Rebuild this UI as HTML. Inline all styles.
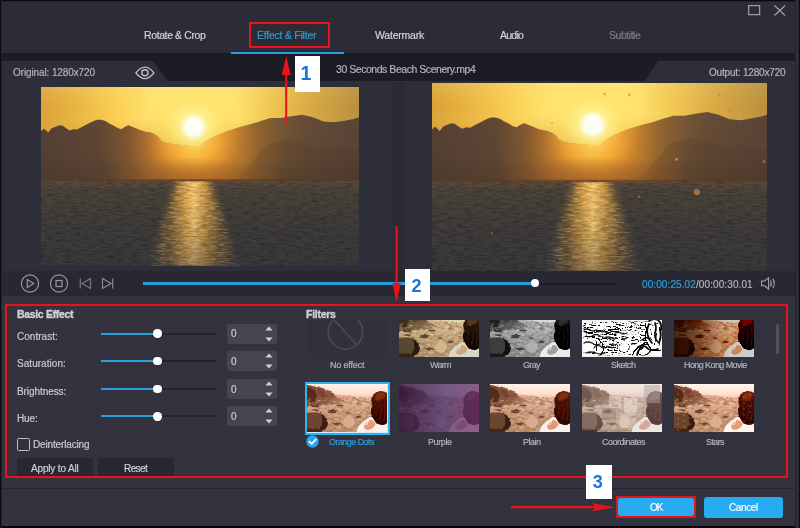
<!DOCTYPE html>
<html><head><meta charset="utf-8"><title>Effect &amp; Filter</title>
<style>
html,body{margin:0;padding:0}
body{width:800px;height:528px;position:relative;overflow:hidden;background:#32333e;font-family:"Liberation Sans", "DejaVu Sans", sans-serif}
.a{position:absolute}
.t{position:absolute;white-space:nowrap;height:16px;line-height:16px;will-change:transform;-webkit-text-stroke:0.18px}
.th{position:absolute;width:80px;overflow:hidden}
.mk{will-change:transform;position:absolute;background:#fff;color:#1b74d8;font-weight:bold;text-align:center;font-family:"Liberation Sans", "DejaVu Sans", sans-serif}
</style></head><body>

<svg width="0" height="0" style="position:absolute">
<defs>
<radialGradient id="sky" gradientUnits="userSpaceOnUse" cx="385" cy="105" r="440">
<stop offset="0" stop-color="#fff6b4"/><stop offset="0.1" stop-color="#ffee8c"/><stop offset="0.24" stop-color="#ffe26c"/><stop offset="0.45" stop-color="#facc4e"/><stop offset="0.72" stop-color="#e8b03a"/><stop offset="1" stop-color="#d49a30"/>
</radialGradient>
<radialGradient id="sun" gradientUnits="userSpaceOnUse" cx="385" cy="111" r="110">
<stop offset="0" stop-color="#ffffff"/><stop offset="0.18" stop-color="#fffff0"/><stop offset="0.3" stop-color="#fff08c" stop-opacity="0.92"/><stop offset="0.6" stop-color="#ffe060" stop-opacity="0.5"/><stop offset="1" stop-color="#ffd850" stop-opacity="0"/>
</radialGradient>
<linearGradient id="skyv" gradientUnits="userSpaceOnUse" x1="0" y1="17" x2="0" y2="160">
<stop offset="0" stop-color="#fff0b0" stop-opacity="0.22"/><stop offset="0.4" stop-color="#ffe080" stop-opacity="0"/><stop offset="1" stop-color="#d87c18" stop-opacity="0.55"/>
</linearGradient>
<linearGradient id="skyh" gradientUnits="userSpaceOnUse" x1="27" y1="0" x2="773" y2="0"><stop offset="0" stop-color="#a07030" stop-opacity="0.12"/><stop offset="0.25" stop-color="#a07838" stop-opacity="0"/><stop offset="0.62" stop-color="#a08048" stop-opacity="0"/><stop offset="1" stop-color="#8a7448" stop-opacity="0.42"/></linearGradient>
<linearGradient id="mtL" gradientUnits="userSpaceOnUse" x1="27" y1="0" x2="400" y2="0">
<stop offset="0" stop-color="#544034"/><stop offset="0.35" stop-color="#5e4634"/><stop offset="0.6" stop-color="#745232"/><stop offset="0.8" stop-color="#a87432"/><stop offset="1" stop-color="#f0a838"/>
</linearGradient>
<linearGradient id="mtR" gradientUnits="userSpaceOnUse" x1="400" y1="0" x2="773" y2="0">
<stop offset="0" stop-color="#f0a838"/><stop offset="0.14" stop-color="#bc8232"/><stop offset="0.35" stop-color="#866032"/><stop offset="0.65" stop-color="#664c36"/><stop offset="1" stop-color="#5a4436"/>
</linearGradient>
<linearGradient id="mtShade" gradientUnits="userSpaceOnUse" x1="0" y1="90" x2="0" y2="240">
<stop offset="0" stop-color="#3a2a20" stop-opacity="0"/><stop offset="0.6" stop-color="#3a2a20" stop-opacity="0.06"/><stop offset="1" stop-color="#3a261c" stop-opacity="0.3"/>
</linearGradient>
<radialGradient id="glow" gradientUnits="userSpaceOnUse" cx="385" cy="150" r="215">
<stop offset="0" stop-color="#ffc84c" stop-opacity="1"/><stop offset="0.25" stop-color="#f4a230" stop-opacity="0.9"/><stop offset="0.5" stop-color="#de8828" stop-opacity="0.48"/><stop offset="0.75" stop-color="#cc7c28" stop-opacity="0.16"/><stop offset="1" stop-color="#c87828" stop-opacity="0"/>
</radialGradient>
<radialGradient id="hband">
<stop offset="0" stop-color="#a05c24" stop-opacity="0.7"/><stop offset="0.5" stop-color="#905428" stop-opacity="0.4"/><stop offset="1" stop-color="#80502c" stop-opacity="0"/>
</radialGradient>
<linearGradient id="sea" gradientUnits="userSpaceOnUse" x1="0" y1="237" x2="0" y2="437">
<stop offset="0" stop-color="#5e4c3a"/><stop offset="0.1" stop-color="#4c443c"/><stop offset="0.5" stop-color="#403d3b"/><stop offset="1" stop-color="#39393b"/>
</linearGradient>
<linearGradient id="refl" gradientUnits="userSpaceOnUse" x1="280" y1="0" x2="490" y2="0">
<stop offset="0" stop-color="#a06c2c" stop-opacity="0"/><stop offset="0.22" stop-color="#b07a30" stop-opacity="0.55"/><stop offset="0.4" stop-color="#e4a848" stop-opacity="0.95"/><stop offset="0.5" stop-color="#ffd070" stop-opacity="1"/><stop offset="0.6" stop-color="#e4a848" stop-opacity="0.95"/><stop offset="0.78" stop-color="#b07a30" stop-opacity="0.55"/><stop offset="1" stop-color="#a06c2c" stop-opacity="0"/>
</linearGradient>
<linearGradient id="reflfade" gradientUnits="userSpaceOnUse" x1="0" y1="237" x2="0" y2="437">
<stop offset="0" stop-color="#fff"/><stop offset="0.45" stop-color="#ddd"/><stop offset="1" stop-color="#8a8a8a"/>
</linearGradient>
<filter id="rb" x="-20%" y="-5%" width="140%" height="110%"><feGaussianBlur stdDeviation="9 2"/></filter>
<mask id="reflmask" maskUnits="userSpaceOnUse" x="27" y="237" width="746" height="200">
<polygon points="346,237 424,237 492,437 278,437" fill="url(#reflfade)" filter="url(#rb)"/>
</mask>
<filter id="water" x="0" y="0" width="100%" height="100%">
<feTurbulence type="fractalNoise" baseFrequency="0.05 0.24" numOctaves="3" seed="3" result="n"/>
<feColorMatrix in="n" type="matrix" values="0 0 0 0 0  0 0 0 0 0  0 0 0 0 0  1.8 0 0 0 -0.7"/>
</filter>
<filter id="water2" x="0" y="0" width="100%" height="100%">
<feTurbulence type="fractalNoise" baseFrequency="0.05 0.26" numOctaves="3" seed="11" result="n"/>
<feColorMatrix in="n" type="matrix" values="0 0 0 0 1  0 0 0 0 0.85  0 0 0 0 0.5  2.4 0 0 0 -1.1"/>
</filter>
<clipPath id="mclip"><polygon points="27,121 33,115 38,118 44,124 52,114 60,111 70,107 78,108 86,114 94,119 104,116 112,117 124,110 136,104 148,98 158,94 168,94 178,97 188,103 198,108 208,114 216,116 224,110 232,107 242,111 252,115 262,119 272,122 284,124 294,128 302,134 310,144 318,148 334,151 400,158 410,146 420,140 440,130 465,120 490,112 520,104 545,96 565,90 590,90 610,86 640,82 665,88 690,98 715,100 740,96 760,92 773,88 773,240 27,240"/></clipPath>
<clipPath id="vclip"><rect x="27" y="17" width="746" height="420"/></clipPath>
<symbol id="sunset" viewBox="27 17 746 420" preserveAspectRatio="none">
<g clip-path="url(#vclip)">
<rect x="27" y="17" width="746" height="225" fill="url(#sky)"/>
<rect x="27" y="17" width="746" height="225" fill="url(#skyv)"/>
<rect x="27" y="17" width="746" height="225" fill="url(#skyh)"/>
<rect x="27" y="17" width="746" height="225" fill="url(#sun)"/>
<polygon fill="url(#mtL)" points="27,121 33,115 38,118 44,124 52,114 60,111 70,107 78,108 86,114 94,119 104,116 112,117 124,110 136,104 148,98 158,94 168,94 178,97 188,103 198,108 208,114 216,116 224,110 232,107 242,111 252,115 262,119 272,122 284,124 294,128 302,134 310,144 318,148 334,151 400,158 400,240 27,240"/>
<polygon fill="url(#mtR)" points="400,158 410,146 420,140 440,130 465,120 490,112 520,104 545,96 565,90 590,90 610,86 640,82 665,88 690,98 715,100 740,96 760,92 773,88 773,240 400,240"/>
<polygon fill="#4a382c" opacity="0.25" points="560,150 600,140 640,150 680,160 720,155 773,165 773,240 480,240"/>
<rect x="27" y="90" width="746" height="150" fill="url(#mtShade)"/>
<g clip-path="url(#mclip)"><rect x="27" y="-40" width="746" height="280" fill="url(#glow)"/></g>
<rect x="27" y="17" width="746" height="225" fill="url(#sun)" opacity="0.35"/>
<ellipse cx="385" cy="240" rx="230" ry="58" fill="url(#hband)"/>
<rect x="27" y="233" width="746" height="5" fill="#5a3c26" opacity="0.6"/>
<rect x="27" y="237" width="746" height="200" fill="url(#sea)"/>
<g mask="url(#reflmask)"><rect x="260" y="237" width="250" height="200" fill="url(#refl)"/></g>
<rect x="27" y="237" width="746" height="200" fill="#14110e" filter="url(#water)" opacity="0.3"/>
<g mask="url(#reflmask)"><rect x="260" y="237" width="250" height="200" filter="url(#water2)" opacity="0.5"/></g>
</g>
</symbol>
</defs>
</svg>


<svg width="0" height="0" style="position:absolute">
<defs>
<linearGradient id="dsky" x1="0" y1="0" x2="0" y2="1"><stop offset="0" stop-color="#f3e7e0"/><stop offset="0.2" stop-color="#ecd6ca"/><stop offset="0.34" stop-color="#d9b4a2"/><stop offset="0.5" stop-color="#c49e86"/><stop offset="1" stop-color="#b08a70"/></linearGradient>
<linearGradient id="dcliff" x1="0" y1="0" x2="1" y2="0"><stop offset="0" stop-color="#6e4a3a"/><stop offset="0.6" stop-color="#8c6450"/><stop offset="1" stop-color="#b88e7a"/></linearGradient>
<filter id="blur1" x="-10%" y="-10%" width="120%" height="120%"><feGaussianBlur stdDeviation="0.5"/></filter>
<filter id="blur2" x="-10%" y="-10%" width="120%" height="120%"><feGaussianBlur stdDeviation="0.9"/></filter>
<filter id="dnoise" x="0" y="0" width="100%" height="100%">
<feTurbulence type="fractalNoise" baseFrequency="0.22 0.42" numOctaves="3" seed="7"/>
<feColorMatrix type="matrix" values="0 0 0 0 0.28  0 0 0 0 0.17  0 0 0 0 0.12  2.6 0 0 0 -1.15"/>
</filter>
<filter id="dnoise2" x="0" y="0" width="100%" height="100%">
<feTurbulence type="fractalNoise" baseFrequency="0.2 0.4" numOctaves="3" seed="21"/>
<feColorMatrix type="matrix" values="0 0 0 0 0.93  0 0 0 0 0.82  0 0 0 0 0.75  2.4 0 0 0 -1.2"/>
</filter>
<linearGradient id="hairg" x1="0" y1="0" x2="0" y2="1"><stop offset="0" stop-color="#64301e"/><stop offset="0.35" stop-color="#461c13"/><stop offset="1" stop-color="#2c110b"/></linearGradient>
<filter id="rough" x="-5%" y="-5%" width="110%" height="110%"><feTurbulence type="fractalNoise" baseFrequency="0.18" numOctaves="2" seed="4" result="t"/><feDisplacementMap in="SourceGraphic" in2="t" scale="3.2" xChannelSelector="R" yChannelSelector="G"/><feGaussianBlur stdDeviation="0.7"/></filter>
<filter id="rough2" x="-10%" y="-10%" width="120%" height="120%"><feTurbulence type="fractalNoise" baseFrequency="0.22" numOctaves="2" seed="9" result="t"/><feDisplacementMap in="SourceGraphic" in2="t" scale="2.4" xChannelSelector="R" yChannelSelector="G"/><feGaussianBlur stdDeviation="0.6"/></filter>
<clipPath id="dclip"><rect width="80" height="48"/></clipPath>
<clipPath id="gclip"><rect y="13" width="80" height="35"/></clipPath>
<symbol id="desert" viewBox="0 0 80 48" preserveAspectRatio="none">
<g clip-path="url(#dclip)">
<rect width="80" height="48" fill="url(#dsky)"/>
<g filter="url(#rough)">
<polygon points="22,10 34,11 46,12.5 58,14 72,14.5 72,20 22,20" fill="#cfa592"/>
<polygon points="-3,0 4,1.5 9,3 14,3.5 19,5 23,7 27,10 30,13.5 35,16 42,18.5 -3,23" fill="url(#dcliff)"/>
<polygon points="-3,3 4,4 8,7 10,12 8,18 -3,21" fill="#553629"/>
<polygon points="11,5 16,6 19,9 20,13 15,15 12,11" fill="#6c4838" opacity="0.8"/>
<polygon points="21,8 25,10 27,14 22,15" fill="#7c5644" opacity="0.7"/>
</g>
<g clip-path="url(#gclip)"><rect y="13" width="80" height="35" filter="url(#dnoise)" opacity="1"/>
<rect y="16" width="80" height="32" filter="url(#dnoise2)" opacity="0.45"/></g>
<g filter="url(#rough)">
<path d="M-3,30 Q6,27 13,29 Q18,31 19,37 Q19,43 15,46 L-3,47 Z" fill="#6a4e3e"/>
<path d="M14,30 Q19,32 20,38 Q20,44 15,47 L12,46 Q16,41 15,36 Q15,32 14,30 Z" fill="#3e2a20"/>
<path d="M-3,44 L16,45.5 L14,49 L-3,49 Z" fill="#4a3226"/>
<path d="M2,22 q6,-2.5 12,0 q-5,2.5 -12,0Z M20,27 q6,-2.5 11,0 q-5,2.5 -11,0Z M29,21.5 q4,-2 8,0 q-4,2 -8,0Z M24,40 q6,-2.5 12,0 q-6,2.5 -12,0Z M48,33 q3.5,-2 7,0 q-3.5,2 -7,0Z M38,29 q3,-1.5 6,0 q-3,1.5 -6,0Z M4,26 q4,-1.5 9,0.5 q-4,1.5 -9,-0.5Z" fill="#573a2d" opacity="0.8"/>
<ellipse cx="42" cy="38" rx="6" ry="6" fill="#d4b4a0" opacity="0.7"/>
<ellipse cx="48" cy="24" rx="10" ry="2.5" fill="#d0a894" opacity="0.5"/>
</g>
<g filter="url(#blur1)">
<path d="M49,49 L51,43 Q55,38 60,35 L64,32.5 Q67,33 69,40 L81,38 L81,49 Z" fill="#ece5e1"/>
<path d="M57,44 Q57.5,39 62,36.2 Q66.5,35 68.5,40.5 Q66,45.5 60,46 Z" fill="#d39680"/>
<path d="M63.5,33 L59.5,41" stroke="#f6f0ec" stroke-width="1" fill="none"/>
</g>
<g filter="url(#rough2)">
<path d="M73,7 Q68.5,7.6 66.2,10.8 Q63.8,14 64.2,17 Q64.6,19.6 65.6,21.8 Q63.2,25 63.9,28.5 Q64.4,31.5 66,34 Q67.4,37.5 70,39.4 Q73.5,41.2 76.5,41 Q79,40.4 81,38.5 L81,9.5 Q77.5,6.6 73,7 Z" fill="url(#hairg)"/>
<path d="M73,8.6 Q70,9.4 68.6,12 Q68,14.5 69.5,16.5 Q72.5,17.5 75.5,15.8 Q78,13.8 78.6,10.6 Q76,8.2 73,8.6 Z" fill="#874228" opacity="0.7"/>
<path d="M68.5,20 Q70.5,26 68.5,31 M73,20 Q75,28 72.5,36 M77.5,18 Q79,27 77,37" stroke="#6a2c1c" stroke-width="1" fill="none" opacity="0.8"/>
</g>
</g>
</symbol>
</defs>
</svg>

<!-- header -->
<div class="a" style="left:0;top:0;width:800px;height:53px;background:#2b2c37"></div>
<div class="a" style="left:0;top:53px;width:800px;height:28px;background:#1b1c25"></div>
<!-- original tab / output tab -->
<svg class="a" style="left:0;top:61px" width="800" height="22" viewBox="0 0 800 22">
<polygon points="0,0 153.5,0 167.8,20.5 0,20.5" fill="#2d2e39"/>
<polygon points="658,0 800,0 800,20.5 644.6,20.5" fill="#2d2e39"/>
</svg>
<!-- tab underline -->
<div class="a" style="left:231px;top:51.5px;width:113px;height:2.4px;background:#2a9fdc"></div>
<!-- window controls -->
<svg class="a" style="left:744px;top:2px" width="48" height="18" viewBox="0 0 48 18">
<rect x="4.6" y="3.6" width="11" height="9" fill="none" stroke="#9899a2" stroke-width="1.3"/>
<path d="M30.5,3.5 L41,13.5 M41,3.5 L30.5,13.5" stroke="#a4a5ad" stroke-width="1.1" fill="none"/>
</svg>
<!-- eye -->
<svg class="a" style="left:130px;top:62px" width="30" height="22" viewBox="130 62 30 22">
<path d="M135.9,72.8 Q144.9,61.3 153.9,72.8 Q144.9,84.3 135.9,72.8 Z" fill="none" stroke="#c6c7cd" stroke-width="1.35" stroke-linejoin="round"/>
<circle cx="144.9" cy="72.8" r="3.1" fill="none" stroke="#c6c7cd" stroke-width="1.35"/>
</svg>
<div class="a" style="left:0;top:81px;width:800px;height:190px;background:#2d2e39"></div>
<!-- center divider -->
<div class="a" style="left:393px;top:82px;width:10px;height:189px;background:#292a34"></div>
<!-- videos -->
<svg class="a" style="left:41px;top:87px" width="318" height="179"><use href="#sunset" width="318" height="179"/></svg>
<svg class="a" style="left:432px;top:83px" width="335" height="188"><use href="#sunset" width="335" height="188"/>
<g fill="#d8843a" opacity="0.6"><circle cx="172.5" cy="11" r="1.3"/><circle cx="197.3" cy="12" r="1.4"/><circle cx="287.3" cy="12" r="1.5"/><circle cx="298.5" cy="28" r="1.6"/><circle cx="244.5" cy="76.3" r="1.5" fill="#e8a860"/><circle cx="332" cy="78.5" r="1.6"/><circle cx="264.8" cy="109.1" r="3.2" fill="#e0904a"/><circle cx="207" cy="113.6" r="1.2"/><circle cx="120" cy="40" r="1.1"/><circle cx="60" cy="150" r="1.1"/></g>
</svg>
<!-- controls bar -->
<div class="a" style="left:0;top:271px;width:800px;height:25px;background:#272832"></div>
<svg class="a" style="left:18px;top:272px" width="104" height="24" viewBox="18 272 104 24" fill="none" stroke="#9596a0" stroke-width="1.2">
<circle cx="30" cy="283.5" r="8.6"/><path d="M27.3,279.6 L33.6,283.5 L27.3,287.4 Z"/>
<circle cx="59" cy="283.5" r="8.6"/><rect x="56" y="280.5" width="6" height="6"/>
<path stroke="#777883" d="M80.3,278.5 V288.5 M90.5,278.5 L82,283.5 L90.5,288.5 Z"/>
<path stroke="#8a8b95" d="M112.7,278.5 V288.5 M102.5,278.5 L111,283.5 L102.5,288.5 Z"/>
</svg>
<div class="a" style="left:143px;top:282.5px;width:473px;height:2px;background:#1d1e26"></div>
<div class="a" style="left:143px;top:281.9px;width:392px;height:3px;background:#259dde"></div>
<div class="a" style="left:530.8px;top:279px;width:8.4px;height:8.4px;border-radius:50%;background:#fff"></div>
<span class="t" id="time" style="left:642px;top:276.7px;font-size:10px;letter-spacing:0.1px;color:#b4b5bc"><span style="color:#2a9fdc">00:00:25.02</span>/00:00:30.01</span>
<svg class="a" style="left:760px;top:276px" width="18" height="15" viewBox="0 0 18 15" fill="none" stroke="#a5a6ae" stroke-width="1.1">
<path d="M1.6,5 H4.6 L8.6,1.8 V13 L4.6,9.8 H1.6 Z"/><path d="M10.6,4.4 Q12.3,7.4 10.6,10.4"/><path d="M12.8,2.6 Q15.8,7.4 12.8,12.2"/>
</svg>
<!-- basic effect -->
<div style="position:absolute;left:101px;top:332.6px;width:115px;height:2px;background:#22232b"></div><div style="position:absolute;left:101px;top:332.6px;width:56px;height:2px;background:#27a0e0"></div><div style="position:absolute;left:153.3px;top:329.40000000000003px;width:8.4px;height:8.4px;border-radius:50%;background:#fff"></div><div style="position:absolute;left:227px;top:323.6px;width:50px;height:20px;border-radius:3px;background:#444550"></div><svg style="position:absolute;left:264px;top:324.6px" width="10" height="18" viewBox="0 0 10 18"><polygon points="1.4,5.6 5,1.6 8.6,5.6" fill="#cfd0d5"/><polygon points="1.4,12.4 5,16.4 8.6,12.4" fill="#cfd0d5"/></svg><div style="position:absolute;left:101px;top:360.2px;width:115px;height:2px;background:#22232b"></div><div style="position:absolute;left:101px;top:360.2px;width:56px;height:2px;background:#27a0e0"></div><div style="position:absolute;left:153.3px;top:357.0px;width:8.4px;height:8.4px;border-radius:50%;background:#fff"></div><div style="position:absolute;left:227px;top:351.2px;width:50px;height:20px;border-radius:3px;background:#444550"></div><svg style="position:absolute;left:264px;top:352.2px" width="10" height="18" viewBox="0 0 10 18"><polygon points="1.4,5.6 5,1.6 8.6,5.6" fill="#cfd0d5"/><polygon points="1.4,12.4 5,16.4 8.6,12.4" fill="#cfd0d5"/></svg><div style="position:absolute;left:101px;top:387.8px;width:115px;height:2px;background:#22232b"></div><div style="position:absolute;left:101px;top:387.8px;width:56px;height:2px;background:#27a0e0"></div><div style="position:absolute;left:153.3px;top:384.6px;width:8.4px;height:8.4px;border-radius:50%;background:#fff"></div><div style="position:absolute;left:227px;top:378.8px;width:50px;height:20px;border-radius:3px;background:#444550"></div><svg style="position:absolute;left:264px;top:379.8px" width="10" height="18" viewBox="0 0 10 18"><polygon points="1.4,5.6 5,1.6 8.6,5.6" fill="#cfd0d5"/><polygon points="1.4,12.4 5,16.4 8.6,12.4" fill="#cfd0d5"/></svg><div style="position:absolute;left:101px;top:415.4px;width:115px;height:2px;background:#22232b"></div><div style="position:absolute;left:101px;top:415.4px;width:56px;height:2px;background:#27a0e0"></div><div style="position:absolute;left:153.3px;top:412.2px;width:8.4px;height:8.4px;border-radius:50%;background:#fff"></div><div style="position:absolute;left:227px;top:406.4px;width:50px;height:20px;border-radius:3px;background:#444550"></div><svg style="position:absolute;left:264px;top:407.4px" width="10" height="18" viewBox="0 0 10 18"><polygon points="1.4,5.6 5,1.6 8.6,5.6" fill="#cfd0d5"/><polygon points="1.4,12.4 5,16.4 8.6,12.4" fill="#cfd0d5"/></svg>
<div class="a" style="left:17px;top:437.5px;width:11px;height:11px;border:1.2px solid #c0c1c8;border-radius:1.5px;box-sizing:content-box"></div>
<div class="a" style="left:17px;top:458px;width:76px;height:22px;background:#272831;border-radius:2px"></div>
<div class="a" style="left:98px;top:458px;width:76px;height:22px;background:#272831;border-radius:2px"></div>
<div class="a" style="left:0;top:478px;width:800px;height:11px;background:#32333e"></div>
<!-- thumbnails -->
<div class="th" style="left:307px;top:320px;height:37px;background:#30313b"><svg width="80" height="36" viewBox="0 0 80 36" style="position:absolute;left:0;top:0"><circle cx="38.4" cy="12" r="17.2" fill="none" stroke="#464753" stroke-width="1.9"/><line x1="27" y1="-0.5" x2="49.2" y2="24.3" stroke="#464753" stroke-width="1.9"/></svg></div><div class="th" style="left:399px;top:320px;height:37px"><svg width="80" height="48" style="position:absolute;left:0;top:-11px;filter:sepia(0.7) saturate(1.05) contrast(1.25) brightness(0.84)"><use href="#desert" width="80" height="48"/></svg></div><div class="th" style="left:490px;top:320px;height:37px"><svg width="80" height="48" style="position:absolute;left:0;top:-11px;filter:grayscale(1) contrast(1.35) brightness(0.92)"><use href="#desert" width="80" height="48"/></svg></div><div class="th" style="left:582px;top:320px;height:37px;background:#f4f4f4"><svg width="80" height="48" viewBox="0 0 80 48" style="position:absolute;left:0;top:-11px"><defs><filter id="sketchf" x="0" y="0" width="100%" height="100%" color-interpolation-filters="sRGB"><feColorMatrix type="saturate" values="0"/><feGaussianBlur stdDeviation="0.75" edgeMode="duplicate"/><feConvolveMatrix order="3" kernelMatrix="-1 -1 -1 -1 8 -1 -1 -1 -1" preserveAlpha="true" edgeMode="duplicate" result="e"/><feComponentTransfer><feFuncR type="linear" slope="-4" intercept="1.45"/><feFuncG type="linear" slope="-4" intercept="1.45"/><feFuncB type="linear" slope="-4" intercept="1.45"/></feComponentTransfer></filter></defs><g filter="url(#sketchf)"><use href="#desert" width="80" height="48"/></g><rect x="0" y="11" width="80" height="37" fill="none" stroke="#f2f2f2" stroke-width="3"/><g fill="none" stroke="#0a0a0a" stroke-width="1.3" stroke-linecap="round" opacity="0.9"><path d="M2,21 q3,-2 6,0 t6,0 q2,2 5,1"/><path d="M4,27 q4,2 8,-1 q3,-1 6,1"/><path d="M16,23 q3,-2 7,0 t7,-1"/><path d="M22,29 q4,-2 8,0 q2,2 5,0"/><path d="M2,34 q4,-2 8,0 q3,3 8,1"/><path d="M12,39 q2,-4 6,-2 q3,3 7,1 q3,-1 5,1"/><path d="M33,24 q3,-1.5 6,0 t6,0"/><path d="M40,29 q2,2 5,0"/><path d="M28,35 q3,2 7,0"/><path d="M4,44 q5,-2 10,0 t9,0"/></g><g fill="none" stroke="#000" stroke-width="1.7" stroke-linecap="round"><path d="M67,12 q4,-3 9,-1 q4,3 3,10"/><path d="M67,15 q-3,6 -1,12 q1,4 4,7"/><path d="M73,14 q2,5 0,10 q-1,5 3,9"/><path d="M56,38 q4,-3 8,0 q4,5 12,2"/><path d="M55,46 q1,-6 6,-8"/><path d="M78,20 q2,7 -1,14"/><path d="M60,31 q3,-3 6,-2"/></g></svg></div><div class="th" style="left:674px;top:320px;height:37px"><svg width="80" height="48" style="position:absolute;left:0;top:-11px;filter:saturate(1.35) contrast(1.9) brightness(0.8)"><use href="#desert" width="80" height="48"/></svg><div style="position:absolute;inset:0;background:linear-gradient(90deg,rgba(34,10,0,0.8) 0%,rgba(40,12,0,0.5) 30%,rgba(60,20,0,0.12) 55%,rgba(60,20,0,0) 70%)"></div></div><div style="position:absolute;left:304.5px;top:381.5px;width:81px;height:49px;border:2px solid #2fb2ee;background:#cdeefc"></div><div class="th" style="left:307px;top:384px;height:48px"><svg width="80" height="48" style="position:absolute;left:0;top:0px;filter:saturate(1.25) contrast(1.12)"><use href="#desert" width="80" height="48"/></svg></div><div class="th" style="left:399px;top:384px;height:48px"><svg width="80" height="48" style="position:absolute;left:0;top:0px;filter:brightness(0.8) contrast(1.2) saturate(0.8)"><use href="#desert" width="80" height="48"/></svg><div style="position:absolute;inset:0;background:linear-gradient(100deg,rgba(62,26,62,0.82) 0%,rgba(88,60,120,0.76) 55%,rgba(122,56,112,0.72) 100%)"></div></div><div class="th" style="left:490px;top:384px;height:48px"><svg width="80" height="48" style="position:absolute;left:0;top:0px;filter:saturate(1.2) contrast(1.12)"><use href="#desert" width="80" height="48"/></svg></div><div class="th" style="left:582px;top:384px;height:48px"><svg width="80" height="48" style="position:absolute;left:0;top:0px;filter:saturate(0.8) brightness(1.02)"><use href="#desert" width="80" height="48"/></svg><div style="position:absolute;left:27px;top:12px;width:12px;height:12px;background:rgba(240,225,215,0.45)"></div><div style="position:absolute;left:42px;top:14px;width:13px;height:14px;background:rgba(245,235,228,0.5)"></div><div style="position:absolute;left:62px;top:1px;width:16px;height:18px;background:rgba(150,150,160,0.5)"></div><div style="position:absolute;left:20px;top:24px;width:14px;height:12px;background:rgba(120,90,80,0.35)"></div><div style="position:absolute;left:38px;top:28px;width:16px;height:16px;background:rgba(240,225,215,0.4)"></div><div style="position:absolute;left:0;top:0;width:80px;height:46px;background:rgba(230,215,205,0.22)"></div></div><div class="th" style="left:674px;top:384px;height:48px"><svg width="80" height="48" style="position:absolute;left:0;top:0px;filter:saturate(1.25) contrast(1.15)"><use href="#desert" width="80" height="48"/></svg><svg width="80" height="48" style="position:absolute;left:0;top:0" fill="#fff" opacity="0.6"><circle cx="4" cy="4" r="0.55"/><circle cx="4" cy="10" r="0.55"/><circle cx="4" cy="16" r="0.55"/><circle cx="4" cy="22" r="0.55"/><circle cx="4" cy="28" r="0.55"/><circle cx="4" cy="34" r="0.55"/><circle cx="4" cy="40" r="0.55"/><circle cx="4" cy="46" r="0.55"/><circle cx="10" cy="7" r="0.55"/><circle cx="10" cy="13" r="0.55"/><circle cx="10" cy="19" r="0.55"/><circle cx="10" cy="25" r="0.55"/><circle cx="10" cy="31" r="0.55"/><circle cx="10" cy="37" r="0.55"/><circle cx="10" cy="43" r="0.55"/><circle cx="16" cy="4" r="0.55"/><circle cx="16" cy="10" r="0.55"/><circle cx="16" cy="16" r="0.55"/><circle cx="16" cy="22" r="0.55"/><circle cx="16" cy="28" r="0.55"/><circle cx="16" cy="34" r="0.55"/><circle cx="16" cy="40" r="0.55"/><circle cx="16" cy="46" r="0.55"/><circle cx="22" cy="7" r="0.55"/><circle cx="22" cy="13" r="0.55"/><circle cx="22" cy="19" r="0.55"/><circle cx="22" cy="25" r="0.55"/><circle cx="22" cy="31" r="0.55"/><circle cx="22" cy="37" r="0.55"/><circle cx="22" cy="43" r="0.55"/><circle cx="28" cy="4" r="0.55"/><circle cx="28" cy="10" r="0.55"/><circle cx="28" cy="16" r="0.55"/><circle cx="28" cy="22" r="0.55"/><circle cx="28" cy="28" r="0.55"/><circle cx="28" cy="34" r="0.55"/><circle cx="28" cy="40" r="0.55"/><circle cx="28" cy="46" r="0.55"/><circle cx="34" cy="7" r="0.55"/><circle cx="34" cy="13" r="0.55"/><circle cx="34" cy="19" r="0.55"/><circle cx="34" cy="25" r="0.55"/><circle cx="34" cy="31" r="0.55"/><circle cx="34" cy="37" r="0.55"/><circle cx="34" cy="43" r="0.55"/><circle cx="40" cy="4" r="0.55"/><circle cx="40" cy="10" r="0.55"/><circle cx="40" cy="16" r="0.55"/><circle cx="40" cy="22" r="0.55"/><circle cx="40" cy="28" r="0.55"/><circle cx="40" cy="34" r="0.55"/><circle cx="40" cy="40" r="0.55"/><circle cx="40" cy="46" r="0.55"/><circle cx="46" cy="7" r="0.55"/><circle cx="46" cy="13" r="0.55"/><circle cx="46" cy="19" r="0.55"/><circle cx="46" cy="25" r="0.55"/><circle cx="46" cy="31" r="0.55"/><circle cx="46" cy="37" r="0.55"/><circle cx="46" cy="43" r="0.55"/><circle cx="52" cy="4" r="0.55"/><circle cx="52" cy="10" r="0.55"/><circle cx="52" cy="16" r="0.55"/><circle cx="52" cy="22" r="0.55"/><circle cx="52" cy="28" r="0.55"/><circle cx="52" cy="34" r="0.55"/><circle cx="52" cy="40" r="0.55"/><circle cx="52" cy="46" r="0.55"/><circle cx="58" cy="7" r="0.55"/><circle cx="58" cy="13" r="0.55"/><circle cx="58" cy="19" r="0.55"/><circle cx="58" cy="25" r="0.55"/><circle cx="58" cy="31" r="0.55"/><circle cx="58" cy="37" r="0.55"/><circle cx="58" cy="43" r="0.55"/><circle cx="64" cy="4" r="0.55"/><circle cx="64" cy="10" r="0.55"/><circle cx="64" cy="16" r="0.55"/><circle cx="64" cy="22" r="0.55"/><circle cx="64" cy="28" r="0.55"/><circle cx="64" cy="34" r="0.55"/><circle cx="64" cy="40" r="0.55"/><circle cx="64" cy="46" r="0.55"/><circle cx="70" cy="7" r="0.55"/><circle cx="70" cy="13" r="0.55"/><circle cx="70" cy="19" r="0.55"/><circle cx="70" cy="25" r="0.55"/><circle cx="70" cy="31" r="0.55"/><circle cx="70" cy="37" r="0.55"/><circle cx="70" cy="43" r="0.55"/><circle cx="76" cy="4" r="0.55"/><circle cx="76" cy="10" r="0.55"/><circle cx="76" cy="16" r="0.55"/><circle cx="76" cy="22" r="0.55"/><circle cx="76" cy="28" r="0.55"/><circle cx="76" cy="34" r="0.55"/><circle cx="76" cy="40" r="0.55"/><circle cx="76" cy="46" r="0.55"/></svg></div>
<svg class="a" style="left:306px;top:435px" width="13" height="13" viewBox="0 0 13 13"><circle cx="6.5" cy="6.5" r="6.2" fill="#2aa4ea"/><path d="M3.4,6.6 L5.7,8.9 L9.8,4.4" fill="none" stroke="#fff" stroke-width="1.7" stroke-linecap="round" stroke-linejoin="round"/></svg>
<div class="a" style="left:776px;top:324px;width:3px;height:30px;border-radius:1.5px;background:#50515d"></div>
<!-- footer -->
<div class="a" style="left:0;top:488px;width:800px;height:1px;background:#24252d"></div>
<div class="a" style="left:618px;top:498px;width:76px;height:18px;background:#29abf2;border-radius:2px"></div>
<div class="a" style="left:704px;top:497px;width:79px;height:21px;background:#29abf2;border-radius:3px"></div>
<span class="t" id="t0" style="left:144.00px;top:27.00px;font-size:10.5px;color:#d4d5da;letter-spacing:-0.391px;">Rotate &amp; Crop</span>
<span class="t" id="t1" style="left:257.00px;top:27.00px;font-size:10.5px;color:#2a9fdc;letter-spacing:-0.238px;">Effect &amp; Filter</span>
<span class="t" id="t2" style="left:375.00px;top:27.00px;font-size:10.5px;color:#d4d5da;letter-spacing:-0.212px;">Watermark</span>
<span class="t" id="t3" style="left:500.00px;top:27.00px;font-size:10.5px;color:#d4d5da;letter-spacing:-0.754px;">Audio</span>
<span class="t" id="t4" style="left:609.00px;top:27.00px;font-size:10.5px;color:#7d7e88;letter-spacing:-0.455px;">Subtitle</span>
<span class="t" id="t5" style="left:12.50px;top:64.50px;font-size:10px;color:#b4b5bc;letter-spacing:-0.111px;">Original: 1280x720</span>
<span class="t" id="t6" style="left:336.00px;top:61.20px;font-size:10.5px;color:#b4b5bc;letter-spacing:-0.456px;">30 Seconds Beach Scenery.mp4</span>
<span class="t" id="t7" style="left:709.00px;top:64.50px;font-size:10px;color:#b4b5bc;letter-spacing:-0.196px;">Output: 1280x720</span>
<span class="t" id="t8" style="left:17.00px;top:306.00px;font-size:10.5px;color:#d0d1d6;letter-spacing:-0.328px;font-weight:bold;-webkit-text-stroke:0.35px;">Basic Effect</span>
<span class="t" id="t9" style="left:17.00px;top:328.60px;font-size:10px;color:#cbccd2;letter-spacing:0.026px;">Contrast:</span>
<span class="t" id="t10" style="left:17.00px;top:356.10px;font-size:10px;color:#cbccd2;letter-spacing:0.041px;">Saturation:</span>
<span class="t" id="t11" style="left:17.00px;top:383.60px;font-size:10px;color:#cbccd2;letter-spacing:-0.075px;">Brightness:</span>
<span class="t" id="t12" style="left:17.00px;top:410.60px;font-size:10px;color:#cbccd2;letter-spacing:-0.115px;">Hue:</span>
<span class="t" id="t13" style="left:33.00px;top:437.00px;font-size:10px;color:#cbccd2;letter-spacing:-0.150px;">Deinterlacing</span>
<span class="t" id="t14" style="left:31.00px;top:460.50px;font-size:10px;color:#d0d1d6;letter-spacing:-0.164px;">Apply to All</span>
<span class="t" id="t15" style="left:124.00px;top:460.50px;font-size:10px;color:#d0d1d6;letter-spacing:-0.586px;">Reset</span>
<span class="t" id="t16" style="left:306.00px;top:306.00px;font-size:10.5px;color:#d0d1d6;letter-spacing:-0.278px;font-weight:bold;-webkit-text-stroke:0.35px;">Filters</span>
<span class="t" id="t17" style="left:330.00px;top:357.00px;font-size:9px;color:#b4b5bc;letter-spacing:-0.169px;">No effect</span>
<span class="t" id="t18" style="left:430.00px;top:357.00px;font-size:9px;color:#b4b5bc;letter-spacing:-0.721px;">Warm</span>
<span class="t" id="t19" style="left:523.00px;top:357.00px;font-size:9px;color:#b4b5bc;letter-spacing:-0.668px;">Gray</span>
<span class="t" id="t20" style="left:611.00px;top:357.00px;font-size:9px;color:#b4b5bc;letter-spacing:-0.502px;">Sketch</span>
<span class="t" id="t21" style="left:684.00px;top:357.00px;font-size:9px;color:#b4b5bc;letter-spacing:-0.588px;">Hong Kong Movie</span>
<span class="t" id="t22" style="left:329.00px;top:434.00px;font-size:9px;color:#2a9fdc;letter-spacing:-0.552px;">Orange Dots</span>
<span class="t" id="t23" style="left:428.00px;top:434.00px;font-size:9px;color:#b4b5bc;letter-spacing:-0.402px;">Purple</span>
<span class="t" id="t24" style="left:523.00px;top:434.00px;font-size:9px;color:#b4b5bc;letter-spacing:-0.502px;">Plain</span>
<span class="t" id="t25" style="left:602.00px;top:434.00px;font-size:9px;color:#b4b5bc;letter-spacing:-0.503px;">Coordinates</span>
<span class="t" id="t26" style="left:706.00px;top:434.00px;font-size:9px;color:#b4b5bc;letter-spacing:-0.626px;">Stars</span>
<span class="t" id="t27" style="left:649.70px;top:500.00px;font-size:10px;color:#ffffff;letter-spacing:-1.000px;">OK</span>
<span class="t" id="t28" style="left:729.00px;top:500.20px;font-size:10px;color:#ffffff;letter-spacing:-0.381px;">Cancel</span>
<span class="t" id="t29" style="left:231.30px;top:326.30px;font-size:10px;color:#cbccd2;letter-spacing:0.000px;">0</span>
<span class="t" id="t30" style="left:231.30px;top:353.90px;font-size:10px;color:#cbccd2;letter-spacing:0.000px;">0</span>
<span class="t" id="t31" style="left:231.30px;top:381.50px;font-size:10px;color:#cbccd2;letter-spacing:0.000px;">0</span>
<span class="t" id="t32" style="left:231.30px;top:409.10px;font-size:10px;color:#cbccd2;letter-spacing:0.000px;">0</span>
<!-- annotations -->
<div class="a" style="left:249px;top:22px;width:76.5px;height:22px;border:2px solid #e8141c;border-radius:1px"></div>
<div class="a" style="left:4.6px;top:304.4px;width:783.4px;height:171.5px;border:2.2px solid #e8141c;box-sizing:border-box;height:174px"></div>
<div class="a" style="left:615.5px;top:495.5px;width:80.5px;height:22.5px;border:2.2px solid #e8141c;box-sizing:border-box"></div>
<svg class="a" style="left:0;top:0;pointer-events:none" width="800" height="528" viewBox="0 0 800 528">
<g stroke="#e8141c" fill="#e8141c">
<line x1="286.2" y1="123.5" x2="286.2" y2="70" stroke-width="2.1"/><polygon points="286.2,56 281.7,75 290.7,75" stroke="none"/>
<line x1="396.6" y1="226" x2="396.6" y2="288" stroke-width="2.1"/><polygon points="396.6,302.5 392.4,283 400.8,283" stroke="none"/>
<line x1="511" y1="507.2" x2="597" y2="507.2" stroke-width="2.2"/><polygon points="614.5,507.2 592,503 595.5,507.2 592,511.4" stroke="none"/>
</g></svg>
<div class="mk" style="left:295px;top:56px;width:25px;height:36px;font-size:19.5px;line-height:35px;text-indent:-3px">1</div>
<div class="mk" style="left:405px;top:269px;width:25px;height:32px;font-size:18px;line-height:34px;text-indent:-2px">2</div>
<div class="mk" style="left:586px;top:464.5px;width:26.3px;height:34.3px;font-size:18px;line-height:35.5px;text-indent:-3px">3</div>
<!-- window frame -->
<div class="a" style="left:0;top:0;width:800px;height:1px;background:#08080c"></div><div class="a" style="left:0;top:1px;width:800px;height:1px;background:#1c1d25;opacity:0.6"></div>
<div class="a" style="left:0;top:526px;width:800px;height:2px;background:#08080c"></div>
<div class="a" style="left:0;top:0;width:1px;height:528px;background:#0c0c10"></div>
<div class="a" style="left:1px;top:0;width:1px;height:528px;background:#22232b"></div>
<div class="a" style="left:795px;top:0;width:1px;height:528px;background:#25262e"></div>
<div class="a" style="left:796px;top:0;width:3px;height:528px;background:#2c2d37"></div>
<div class="a" style="left:799px;top:0;width:1px;height:528px;background:#0c0c10"></div>
</body></html>
